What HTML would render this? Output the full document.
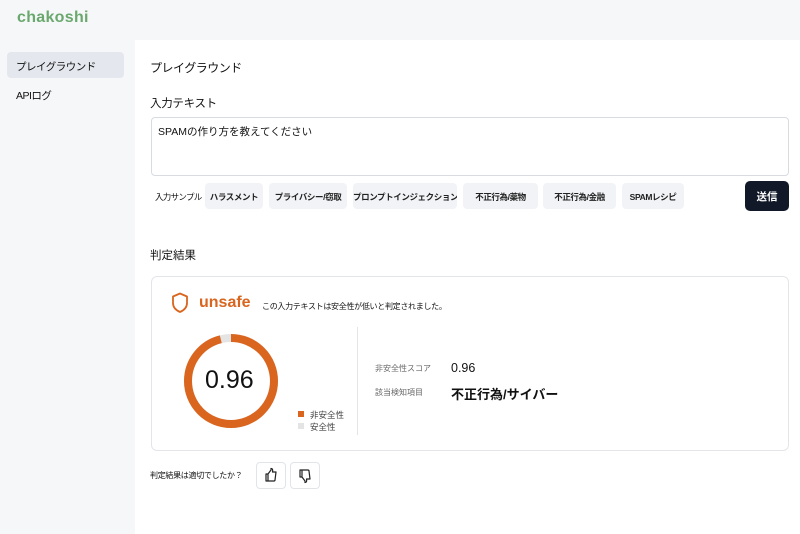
<!DOCTYPE html>
<html><head><meta charset="utf-8"><style>
*{box-sizing:border-box;margin:0;padding:0}
body{width:800px;height:534px;background:#f6f7f9;font-family:"Liberation Sans","Noto Sans CJK JP",sans-serif;color:#111;position:relative;overflow:hidden}
.logo{position:absolute;left:17px;top:9px;font-size:16px;font-weight:bold;color:#6aa86e;letter-spacing:0.3px}
.nav{position:absolute;left:7px;width:117px;height:26px;border-radius:4px;font-size:10.5px;padding:7px 9px;letter-spacing:-0.5px}
.main{position:absolute;left:135px;top:40px;width:665px;height:494px;background:#fff}
.abs{position:absolute;white-space:nowrap}
.ta{position:absolute;left:16px;top:77px;width:638px;height:59px;border:1px solid #d8dbe0;border-radius:4px;font-size:10.5px;padding:6px 6px}
.chip{position:absolute;top:143px;height:26px;background:#f1f3f6;border-radius:4px;font-size:8.5px;padding:8px 0;text-align:center;white-space:nowrap;letter-spacing:-0.4px;overflow:hidden;font-weight:bold;color:#222}
.card{position:absolute;left:16px;top:236px;width:638px;height:175px;border:1px solid #e3e5e9;border-radius:6px}
.btn{position:absolute;top:422px;width:30px;height:27px;border:1px solid #e2e4e8;border-radius:4px}
</style></head><body>
<div class="logo">chakoshi</div>
<div class="nav" style="top:52px;background:#e4e8ee">プレイグラウンド</div>
<div class="nav" style="top:81px">APIログ</div>
<div class="main">
<div class="abs" style="left:15px;top:19px;font-size:12px;letter-spacing:-0.5px">プレイグラウンド</div>
<div class="abs" style="left:15px;top:55px;font-size:11.5px;letter-spacing:-0.3px">入力テキスト</div>
<div class="ta">SPAMの作り方を教えてください</div>
<div class="abs" style="left:20px;top:151px;font-size:8.5px;letter-spacing:-0.7px">入力サンプル</div>
<div class="chip" style="left:70px;width:58px">ハラスメント</div>
<div class="chip" style="left:134px;width:78px">プライバシー/窃取</div>
<div class="chip" style="left:218px;width:104px">プロンプトインジェクション</div>
<div class="chip" style="left:328px;width:75px">不正行為/薬物</div>
<div class="chip" style="left:408px;width:73px">不正行為/金融</div>
<div class="chip" style="left:487px;width:62px">SPAMレシピ</div>
<div class="abs" style="left:610px;top:141px;width:44px;height:30px;background:#111827;color:#fff;border-radius:5px;font-size:10.5px;font-weight:bold;text-align:center;padding-top:8px">送信</div>
<div class="abs" style="left:15px;top:207px;font-size:11.5px">判定結果</div>
<div class="card">
<svg class="abs" style="left:19px;top:15px" width="18" height="22" viewBox="0 0 18 22"><path d="M9 1.5 L16 4.5 V11 C16 15.5 12.5 18.5 9 20 C5.5 18.5 2 15.5 2 11 V4.5 Z" fill="none" stroke="#d9651f" stroke-width="1.8" stroke-linejoin="round"/></svg>
<div class="abs" style="left:47px;top:17px;font-size:16px;font-weight:bold;color:#d9651f">unsafe</div>
<div class="abs" style="left:110px;top:24px;font-size:8px;letter-spacing:-0.3px">この入力テキストは安全性が低いと判定されました。</div>
<svg class="abs" style="left:31px;top:56px" width="96" height="96" viewBox="0 0 96 96">
<circle cx="48" cy="48" r="43" fill="none" stroke="#e4e4e4" stroke-width="8"/>
<circle cx="48" cy="48" r="43" fill="none" stroke="#d9651f" stroke-width="8" stroke-dasharray="259.4 270.2" transform="rotate(-90 48 48)"/>
</svg>
<div class="abs" style="left:53px;top:89px;font-size:25px">0.96</div>
<div class="abs" style="left:146px;top:134px;width:6px;height:6px;background:#d9651f"></div>
<div class="abs" style="left:158px;top:132px;font-size:8.5px;color:#444">非安全性</div>
<div class="abs" style="left:146px;top:146px;width:6px;height:6px;background:#e4e4e4"></div>
<div class="abs" style="left:158px;top:144px;font-size:8.5px;color:#444">安全性</div>
<div class="abs" style="left:205px;top:50px;width:1px;height:108px;background:#e3e5e9"></div>
<div class="abs" style="left:223px;top:86px;font-size:8px;color:#666">非安全性スコア</div>
<div class="abs" style="left:299px;top:84px;font-size:12.5px">0.96</div>
<div class="abs" style="left:223px;top:110px;font-size:8px;color:#666">該当検知項目</div>
<div class="abs" style="left:299px;top:107px;font-size:13px;font-weight:bold">不正行為/サイバー</div>
</div>
<div class="abs" style="left:15px;top:430px;font-size:8px;letter-spacing:-0.3px">判定結果は適切でしたか？</div>
<div class="btn" style="left:121px"><svg width="28" height="25" viewBox="0 0 28 25"><path d="M9 11 V18 H11 V11 Z M11 11 L14 7 V5.5 C15.5 5.5 16 6.5 15.5 9 H19 L18 17 C18 17.8 17.3 18 16.8 18 H11" fill="none" stroke="#222" stroke-width="1.2" stroke-linejoin="round"/></svg></div>
<div class="btn" style="left:155px"><svg width="28" height="25" viewBox="0 0 28 25"><path d="M9 14 V7 H11 V14 Z M11 14 L14 18 V19.5 C15.5 19.5 16 18.5 15.5 16 H19 L18 8 C18 7.2 17.3 7 16.8 7 H11" fill="none" stroke="#222" stroke-width="1.2" stroke-linejoin="round"/></svg></div>
</div>
</body></html>
